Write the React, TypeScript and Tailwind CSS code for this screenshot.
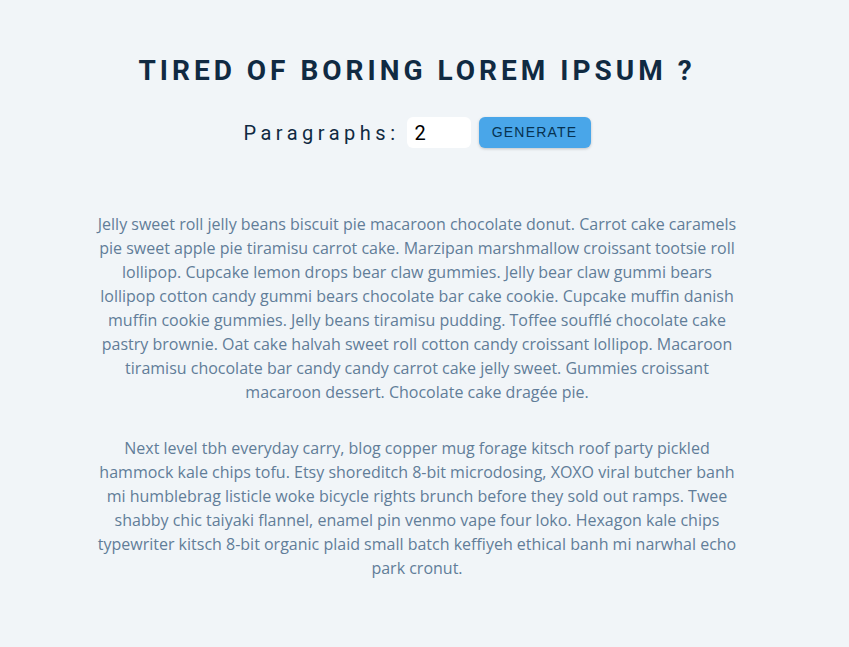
export default function App() {
  const paras = [
    "Jelly sweet roll jelly beans biscuit pie macaroon chocolate donut. Carrot cake caramels pie sweet apple pie tiramisu carrot cake. Marzipan marshmallow croissant tootsie roll lollipop. Cupcake lemon drops bear claw gummies. Jelly bear claw gummi bears lollipop cotton candy gummi bears chocolate bar cake cookie. Cupcake muffin danish muffin cookie gummies. Jelly beans tiramisu pudding. Toffee soufflé chocolate cake pastry brownie. Oat cake halvah sweet roll cotton candy croissant lollipop. Macaroon tiramisu chocolate bar candy candy carrot cake jelly sweet. Gummies croissant macaroon dessert. Chocolate cake dragée pie.",
    "Next level tbh everyday carry, blog copper mug forage kitsch roof party pickled hammock kale chips tofu. Etsy shoreditch 8-bit microdosing, XOXO viral butcher banh mi humblebrag listicle woke bicycle rights brunch before they sold out ramps. Twee shabby chic taiyaki flannel, enamel pin venmo vape four loko. Hexagon kale chips typewriter kitsch 8-bit organic plaid small batch keffiyeh ethical banh mi narwhal echo park cronut.",
  ];
  return (
    <div className="min-h-[647px] w-full bg-[#f1f5f8]">
      <div className="w-[834px]">
        <section className="mx-auto flex w-[640px] flex-col items-center pt-[53px]">
          <h3 className="text-[28px] font-bold uppercase leading-[35px] tracking-[4px] text-[#102a42] [font-family:Roboto,sans-serif]">
            Tired of boring lorem ipsum ?
          </h3>
          <form className="mt-[29px] flex items-center [font-family:Roboto,sans-serif]" onSubmit={(e) => e.preventDefault()}>
            <label className="text-[20px] tracking-[4.5px] text-[#102a42]">Paragraphs:</label>
            <input
              type="number"
              defaultValue={2}
              className="ml-[7px] h-[31px] w-[64px] rounded-md bg-white px-2 text-[20px] text-black outline-none [appearance:textfield]"
            />
            <button className="ml-[8px] h-[31px] w-[112px] rounded-md bg-[#49a6e9] text-center text-[14px] uppercase tracking-[1.2px] text-[#063251] shadow-[0_1px_3px_rgba(0,0,0,0.2)] [font-family:'Liberation_Sans',Arial,sans-serif]">
              Generate
            </button>
          </form>
          <article className="mt-[64px] flex flex-col gap-[32px] text-center text-[16px] leading-[24px] text-[#617d98] [font-family:'Open_Sans',sans-serif]">
            {paras.map((p, i) => (
              <p key={i}>{p}</p>
            ))}
          </article>
        </section>
      </div>
    </div>
  );
}
